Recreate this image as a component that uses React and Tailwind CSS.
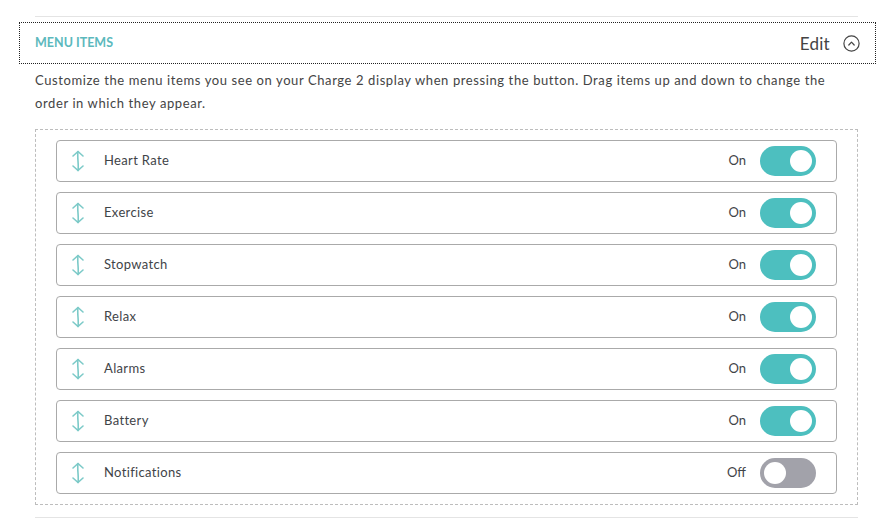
import React, { useState } from "react";

const initialItems = [
  { name: "Heart Rate", on: true },
  { name: "Exercise", on: true },
  { name: "Stopwatch", on: true },
  { name: "Relax", on: true },
  { name: "Alarms", on: true },
  { name: "Battery", on: true },
  { name: "Notifications", on: false },
];

function DragIcon() {
  return (
    <svg width="14" height="22" viewBox="0 0 14 22" fill="none" stroke="#7ccac8" strokeWidth="1.6" strokeLinecap="round" strokeLinejoin="round">
      <path d="M2 6 L7 1.5 L12 6" />
      <path d="M7 1.5 C6 7 8 15 7 20.5" />
      <path d="M2 16 L7 20.5 L12 16" />
    </svg>
  );
}

function Toggle({ on, onClick }) {
  return (
    <button
      onClick={onClick}
      className={`flex h-[30px] w-[56px] items-center rounded-full px-[4px] ${on ? "justify-end bg-[#4dbfbf]" : "justify-start bg-[#a2a2aa]"}`}
    >
      <span className="block h-[22px] w-[22px] rounded-full bg-white" />
    </button>
  );
}

export default function App() {
  const [items, setItems] = useState(initialItems);

  const flip = (i) =>
    setItems((prev) => prev.map((it, j) => (j === i ? { ...it, on: !it.on } : it)));

  return (
    <div className="min-h-screen w-[886px] bg-white pt-[16px] font-['Lato',sans-serif] text-[#3f4448]">
      <div className="ml-[35px] w-[823px] border-t border-[#e4e4e4]" />

      {/* Header */}
      <div className="ml-[19px] mt-[5px] flex h-[42px] w-[857px] items-center justify-between border border-dotted border-[#222] pl-[15px] pr-[15px] pt-[1px]">
        <span className="text-[12.5px] font-bold tracking-[0px] text-[#5cb9bd]">MENU ITEMS</span>
        <div className="flex items-center gap-[13px]">
          <span className="text-[17px] tracking-[0.3px] text-[#444]">Edit</span>
          <svg width="17" height="17" viewBox="0 0 17 17" fill="none" stroke="#444" strokeWidth="1.2">
            <circle cx="8.5" cy="8.5" r="7.6" />
            <path d="M5.8 10 L8.5 7.2 L11.2 10" strokeLinecap="round" strokeLinejoin="round" />
          </svg>
        </div>
      </div>

      <p className="ml-[35px] mt-[5px] w-[805px] text-[13px] leading-[23px] tracking-[0.6px] text-[#444]">
        Customize the menu items you see on your Charge 2 display when pressing the button. Drag items up and down to change the order in which they appear.
      </p>

      {/* List */}
      <div className="ml-[35px] mt-[14px] flex w-[823px] flex-col gap-[10px] border border-dashed border-[#bdbdbd] px-[20px] pb-[10px] pt-[10px]">
        {items.map((it, i) => (
          <div
            key={it.name}
            className="flex h-[42px] items-center rounded-[4px] border border-[#aaaaaa] bg-white pl-[14px] pr-[20px]"
          >
            <DragIcon />
            <span className="ml-[19px] flex-1 text-[13px] tracking-[0.35px] text-[#3f4448]">{it.name}</span>
            <span className="mr-[14px] text-[13px] text-[#3f4448]">{it.on ? "On" : "Off"}</span>
            <Toggle on={it.on} onClick={() => flip(i)} />
          </div>
        ))}
      </div>

      <div className="ml-[35px] mt-[12px] w-[823px] border-t border-[#e4e4e4]" />
    </div>
  );
}
